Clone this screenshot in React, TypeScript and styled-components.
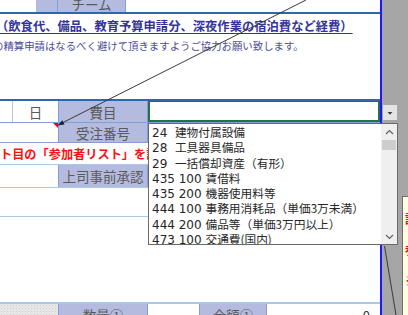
import React from "react";
import styled, { createGlobalStyle } from "styled-components";

const GlobalStyle = createGlobalStyle`
  html, body { margin: 0; padding: 0; background: #fff; }
  body { font-family: "Noto Sans CJK JP", "Noto Sans", sans-serif; }
  * { box-sizing: border-box; }
`;

const LAV = "#b4bbdf";
const LABEL = "#5a5a5a";
const DARK_BLUE = "#2f66b0";
const MID_BLUE = "#819fd3";
const LIGHT_BLUE = "#a9c8e8";
const FONT = `"Noto Sans CJK JP", "Noto Sans", sans-serif`;

const Page = styled.div`
  position: relative;
  width: 408px;
  height: 315px;
  overflow: hidden;
  display: flex;
  background: #a6a6a6;
  font-family: ${FONT};
`;

const Sheet = styled.div`
  width: 382px;
  flex: none;
  border-right: 2px solid #1a1aff;
  background: #fff;
  display: flex;
  flex-direction: column;
`;

const Side = styled.div`
  flex: 1;
  display: flex;
  flex-direction: column;
  padding: 105px 0 0 1px;
`;

const DropButton = styled.div`
  width: 14px;
  height: 15px;
  background: #e4e4e4;
  display: flex;
  align-items: center;
  justify-content: center;
`;

const Row = styled.div<{ $cols: string; $h: number; $line?: string; $lineW?: number }>`
  display: grid;
  grid-template-columns: ${(p) => p.$cols};
  height: ${(p) => p.$h + (p.$lineW ?? 1)}px;
  flex: none;
  border-bottom: ${(p) => p.$lineW ?? 1}px solid ${(p) => p.$line ?? LIGHT_BLUE};
  overflow: hidden;
`;

const TopRow = styled(Row)`
  align-items: center;
`;

const Blank = styled.div<{ $right?: string }>`
  position: relative;
  border-right: ${(p) => (p.$right ? `1px solid ${p.$right}` : "none")};
`;

const Label = styled.div<{ $shift?: number; $noLeft?: boolean }>`
  background: ${LAV};
  border-left: ${(p) => (p.$noLeft ? "none" : `1px solid ${MID_BLUE}`)};
  border-right: 1px solid ${MID_BLUE};
  color: ${LABEL};
  font-size: 13.5px;
  display: flex;
  align-items: center;
  justify-content: center;
  white-space: nowrap;
  height: 100%;
  span {
    transform: translateY(${(p) => p.$shift ?? 0}px);
  }
`;

const PlainLabel = styled.div`
  color: ${LABEL};
  font-size: 13.5px;
  display: flex;
  align-items: center;
  justify-content: center;
`;

const Selected = styled.div`
  box-shadow: inset 0 0 0 2px #217346;
  margin-top: -1px;
`;

const Note = styled.div`
  height: 87px;
  flex: none;
  border-bottom: 2px solid ${DARK_BLUE};
  padding-top: 5px;
  overflow: hidden;
`;

const Title = styled.div`
  font-size: 12.3px;
  line-height: 15px;
  font-weight: bold;
  color: #33339a;
  text-decoration: underline;
  text-underline-offset: 2px;
  white-space: nowrap;
  margin-left: -4px;
`;

const SubTitle = styled.div`
  font-size: 10.4px;
  line-height: 14px;
  color: #4c4c9c;
  white-space: nowrap;
  margin-left: -7px;
  margin-top: 5px;
`;

const RedText = styled.div`
  color: #ff1010;
  font-weight: bold;
  font-size: 12.2px;
  white-space: nowrap;
  display: flex;
  align-items: center;
  overflow: hidden;
`;

const CommentMark = styled.div`
  position: absolute;
  top: 0;
  right: 0;
  width: 0;
  height: 0;
  border-top: 5px solid #e8001c;
  border-left: 5px solid transparent;
`;

const Dotted = styled.div`
  background-color: #e6e6e6;
  background-image: radial-gradient(#cfcfcf 0.6px, transparent 0.8px);
  background-size: 3px 3px;
`;

const ValueCell = styled.div`
  display: flex;
  align-items: center;
  justify-content: flex-end;
  padding-right: 10px;
  font-size: 13px;
  color: #333;
`;

const DropList = styled.div`
  position: absolute;
  left: 148px;
  top: 123px;
  width: 250px;
  height: 122px;
  border: 1px solid #6a6a6a;
  background: #fff;
  display: flex;
  z-index: 2;
`;

const Items = styled.div`
  flex: 1;
  padding: 0 0 0 3px;
  overflow: hidden;
`;

const Item = styled.div`
  font-size: 11.7px;
  line-height: 15.25px;
  height: 15.25px;
  color: #262626;
  white-space: pre;
`;

const Code = styled.span`
  font-family: "DejaVu Sans", "Liberation Sans", sans-serif;
  font-size: 12px;
  white-space: pre;
`;

const ScrollBar = styled.div`
  width: 16px;
  background: #efefef;
  display: flex;
  flex-direction: column;
`;

const ScrollBtn = styled.div`
  height: 15px;
  display: flex;
  align-items: center;
  justify-content: center;
`;

const Thumb = styled.div`
  height: 10px;
  margin: 1px 1px 0 1px;
  background: #cdcdcd;
`;

const Spacer = styled.div`
  flex: 1;
`;

const Overlay = styled.svg`
  position: absolute;
  left: 0;
  top: 0;
  width: 408px;
  height: 315px;
  pointer-events: none;
  z-index: 3;
`;

const CommentBox = styled.div`
  position: absolute;
  left: 402px;
  top: 196px;
  width: 40px;
  height: 140px;
  background: #ffffe1;
  border: 1px solid #6d6d6d;
  padding: 6px 0 0 2px;
  color: #ff0000;
  font-size: 12px;
  font-weight: bold;
  line-height: 31px;
  white-space: nowrap;
  z-index: 1;
`;

const items: [string, string][] = [
  ["24  ", "建物付属設備"],
  ["28  ", "工具器具備品"],
  ["29  ", "一括償却資産（有形）"],
  ["435 100 ", "賃借料"],
  ["435 200 ", "機器使用料等"],
  ["444 100 ", "事務用消耗品（単価3万未満）"],
  ["444 200 ", "備品等（単価3万円以上）"],
  ["473 100 ", "交通費(国内)"],
];

export default function App() {
  return (
    <>
      <GlobalStyle />
      <Page>
        <Sheet>
          <TopRow $cols="36px 22px 68px 1fr" $h={12} $lineW={2} $line={DARK_BLUE}>
            <Blank />
            <Label $noLeft />
            <Label $noLeft $shift={-6}>
              <span>チーム</span>
            </Label>
            <Blank />
          </TopRow>
          <Note>
            <Title>（飲食代、備品、教育予算申請分、深夜作業の宿泊費など経費）</Title>
            <SubTitle>の精算申請はなるべく避けて頂きますようご協力お願い致します。</SubTitle>
          </Note>
          <Row $cols="13px 45px 90px 1fr" $h={21} $line={MID_BLUE}>
            <Blank $right="#b9c6d6" />
            <PlainLabel>日</PlainLabel>
            <Label>
              <span>費目</span>
            </Label>
            <Selected />
          </Row>
          <Row $cols="58px 90px 1fr" $h={19} $line={MID_BLUE}>
            <Blank>
              <CommentMark />
            </Blank>
            <Label>
              <span>受注番号</span>
            </Label>
            <Blank />
          </Row>
          <Row $cols="1fr" $h={21} $line={LIGHT_BLUE}>
            <RedText>ト目の「参加者リスト」を記入してください</RedText>
          </Row>
          <Row $cols="58px 90px 1fr" $h={22} $line={LIGHT_BLUE}>
            <Blank />
            <Label>
              <span>上司事前承認</span>
            </Label>
            <Blank />
          </Row>
          <Row $cols="1fr" $h={28} $line={LIGHT_BLUE}>
            <Blank />
          </Row>
          <Row $cols="1fr" $h={85} $line={LIGHT_BLUE} $lineW={2}>
            <Blank />
          </Row>
          <Row $cols="58px 90px 51px 68px 1fr" $h={22} $lineW={0}>
            <Dotted />
            <Label>
              <span>数量①</span>
            </Label>
            <Blank />
            <Label>
              <span>金額①</span>
            </Label>
            <ValueCell>0</ValueCell>
          </Row>
        </Sheet>
        <Side>
          <DropButton>
            <svg width="8" height="6" viewBox="0 0 8 6">
              <path d="M1.5 2 L6.5 2 L4 4.8 Z" fill="#3c3c3c" />
            </svg>
          </DropButton>
        </Side>

        <CommentBox>
          <div>記入</div>
          <div>参加</div>
          <div>※注</div>
        </CommentBox>

        <DropList>
          <Items>
            {items.map(([code, name]) => (
              <Item key={code + name}>
                <Code>{code}</Code>
                {name}
              </Item>
            ))}
          </Items>
          <ScrollBar>
            <ScrollBtn>
              <svg width="9" height="6" viewBox="0 0 9 6">
                <polyline points="1,5 4.5,1.5 8,5" fill="none" stroke="#606060" strokeWidth="1.2" />
              </svg>
            </ScrollBtn>
            <Thumb />
            <Spacer />
            <ScrollBtn>
              <svg width="9" height="6" viewBox="0 0 9 6">
                <polyline points="1,1 4.5,4.5 8,1" fill="none" stroke="#606060" strokeWidth="1.2" />
              </svg>
            </ScrollBtn>
          </ScrollBar>
        </DropList>

        <Overlay viewBox="0 0 408 315">
          <line x1="306" y1="0" x2="60" y2="124" stroke="#3a3a3a" strokeWidth="1" />
          <path d="M57.5 125.5 L64.5 124.6 L62.3 120.2 Z" fill="#222" />
          <line x1="384.5" y1="246" x2="396" y2="315" stroke="#3a3a3a" strokeWidth="1" />
        </Overlay>
      </Page>
    </>
  );
}
